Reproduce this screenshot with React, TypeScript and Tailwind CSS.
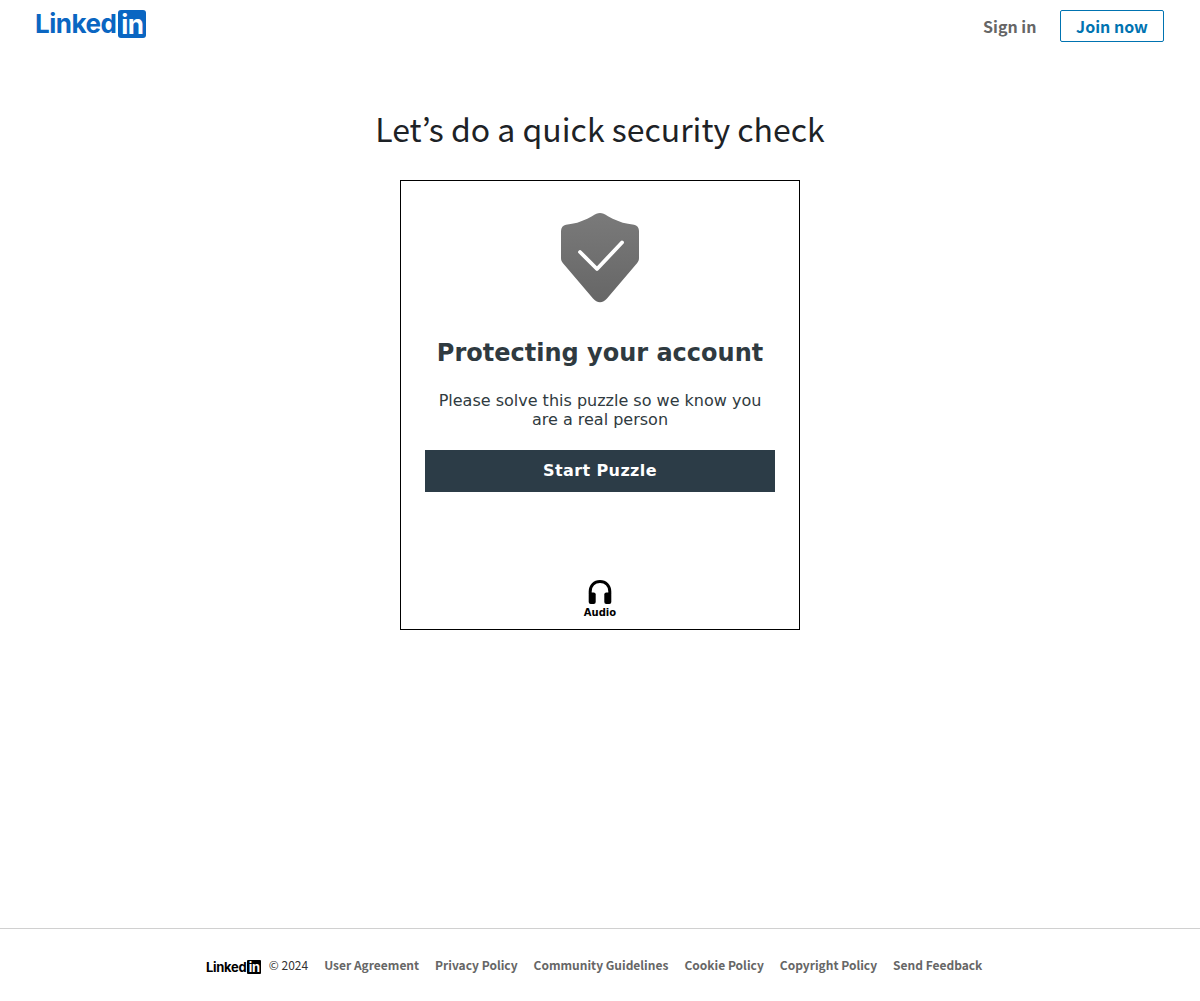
const sans = 'font-["Noto_Sans_CJK_KR","Noto_Sans",sans-serif]';

const footerLinks = ['User Agreement', 'Privacy Policy', 'Community Guidelines', 'Cookie Policy', 'Copyright Policy', 'Send Feedback'];

function Logo({ small }: { small?: boolean }) {
  if (small) {
    return (
      <div className='mt-1 flex items-center font-["Inter",sans-serif] font-bold text-black'>
        <span className="text-[13px] leading-[14px] tracking-[-0.3px]">Linked</span>
        <span className="ml-px flex h-[14px] w-[14px] items-center justify-center rounded-[1px] bg-black text-[13px] leading-[14px] tracking-[-0.3px] text-white">in</span>
      </div>
    );
  }
  return (
    <div className='flex items-center font-["Inter",sans-serif] font-bold text-[#0a66c2]'>
      <span className="text-[26px] leading-[28px] tracking-[-0.5px]">Linked</span>
      <span className="ml-0.5 flex h-[28px] w-[28px] items-center justify-center rounded-[3px] bg-[#0a66c2] pt-0.5 text-[26px] leading-[28px] tracking-[-0.5px] text-white">in</span>
    </div>
  );
}

function Shield() {
  return (
    <svg width="78" height="90" viewBox="0 0 78 90" className="block">
      <defs>
        <linearGradient id="shield-fill" x1="0" y1="0" x2="0" y2="1">
          <stop offset="0" stopColor="#7a7a7a" />
          <stop offset="1" stopColor="#666666" />
        </linearGradient>
      </defs>
      <path
        d="M39 0C36.5 0 34.5 1.2 31 3.2C25 6.6 18 9.6 11 10.8L5 11.8C2 12.4 0 14.6 0 18V45C0 47 .6 48.4 1.8 50L32 85.6C36 90.4 42 90.4 46 85.6L76.2 50C77.4 48.4 78 47 78 45V18C78 14.6 76 12.4 73 11.8L67 10.8C60 9.6 53 6.6 47 3.2C43.5 1.2 41.5 0 39 0Z"
        fill="url(#shield-fill)"
      />
      <path d="M19 39L36 56L61 29.5" fill="none" stroke="#fff" strokeWidth="3.8" strokeLinecap="round" strokeLinejoin="round" />
    </svg>
  );
}

function Headphones() {
  return (
    <svg width="24" height="24" viewBox="0 0 24 24" className="block">
      <path d="M2.2 14V11.5C2.2 5.5 6.4 1.6 12 1.6S21.8 5.5 21.8 11.5V14" fill="none" stroke="#000" strokeWidth="3" />
      <rect x="0.7" y="12.5" width="7" height="11.5" rx="2" fill="#000" />
      <rect x="16.3" y="12.5" width="7" height="11.5" rx="2" fill="#000" />
    </svg>
  );
}

export default function App() {
  return (
    <div className={`flex h-[1001px] flex-col bg-white ${sans}`}>
      <header className="flex h-[52px] items-start justify-between pl-[35px] pr-9 pt-2.5">
        <Logo />
        <div className="flex items-center">
          <a className="mr-[23.5px] text-[16px] font-semibold leading-[32px] text-[#666]">Sign in</a>
          <a className="flex h-8 w-[104px] items-center justify-center rounded-[2px] border border-[#0073b1] text-[16px] font-semibold text-[#0073b1]">Join now</a>
        </div>
      </header>

      <main className="flex flex-1 flex-col items-center">
        <h1 className="mt-[52px] text-[32px] font-normal leading-[48px] text-[#1d2226]">Let’s do a quick security check</h1>
        <section className='mt-[28px] flex h-[450px] w-[400px] flex-col items-center border border-black px-6 pt-[32px] pb-2.5 font-["DejaVu_Sans",sans-serif]'>
          <Shield />
          <h2 className="mt-[35px] text-[24px] font-bold leading-[30px] text-[#2f3a40]">Protecting your account</h2>
          <p className="mt-[23px] w-[340px] text-center text-[16px] leading-[19px] text-[#2f3a40]">Please solve this puzzle so we know you are a real person</p>
          <button className="mt-[21px] h-[42px] w-[350px] bg-[#2c3c47] text-[16px] font-bold tracking-[0.4px] text-white">Start Puzzle</button>
          <div className="mt-auto flex flex-col items-center">
            <Headphones />
            <span className="mt-0.5 text-[10px] font-bold leading-[13px] text-black">Audio</span>
          </div>
        </section>
      </main>

      <footer className="flex h-[73px] items-center border-t border-[#d0d0d0] pl-[206px]">
        <Logo small />
        <span className="ml-[7.5px] text-[12px] text-[#333]">© 2024</span>
        {footerLinks.map((link) => (
          <a key={link} className="ml-4 text-[12px] font-semibold text-[#666]">{link}</a>
        ))}
      </footer>
    </div>
  );
}
